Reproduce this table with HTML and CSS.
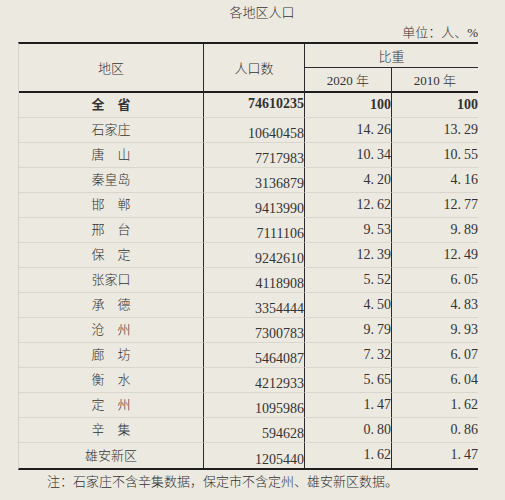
FILE: index.html
```html
<!DOCTYPE html>
<html lang="zh">
<head>
<meta charset="utf-8">
<title>各地区人口</title>
<link rel="stylesheet" href="styles.css">
</head>
<body>
<div class="page">
  <div class="title">各地区人口</div>
  <div class="unit">单位：人、%</div>
  <div class="grid">
    <div class="c h1 span2">地区</div>
    <div class="c h2 span2">人口数</div>
    <div class="c h3">比重</div>
    <div class="c h4">2020 年</div>
    <div class="c h5">2010 年</div>

    <div class="c r bold">全　省</div><div class="c p top bold">74610235</div><div class="c n bold">100</div><div class="c n last bold">100</div>
    <div class="c r">石家庄</div><div class="c p">10640458</div><div class="c n">14<span class="d">.</span>26</div><div class="c n last">13<span class="d">.</span>29</div>
    <div class="c r">唐　山</div><div class="c p">7717983</div><div class="c n">10<span class="d">.</span>34</div><div class="c n last">10<span class="d">.</span>55</div>
    <div class="c r">秦皇岛</div><div class="c p">3136879</div><div class="c n">4<span class="d">.</span>20</div><div class="c n last">4<span class="d">.</span>16</div>
    <div class="c r">邯　郸</div><div class="c p">9413990</div><div class="c n">12<span class="d">.</span>62</div><div class="c n last">12<span class="d">.</span>77</div>
    <div class="c r">邢　台</div><div class="c p">7111106</div><div class="c n">9<span class="d">.</span>53</div><div class="c n last">9<span class="d">.</span>89</div>
    <div class="c r">保　定</div><div class="c p">9242610</div><div class="c n">12<span class="d">.</span>39</div><div class="c n last">12<span class="d">.</span>49</div>
    <div class="c r">张家口</div><div class="c p">4118908</div><div class="c n">5<span class="d">.</span>52</div><div class="c n last">6<span class="d">.</span>05</div>
    <div class="c r">承　德</div><div class="c p">3354444</div><div class="c n">4<span class="d">.</span>50</div><div class="c n last">4<span class="d">.</span>83</div>
    <div class="c r">沧　州</div><div class="c p">7300783</div><div class="c n">9<span class="d">.</span>79</div><div class="c n last">9<span class="d">.</span>93</div>
    <div class="c r">廊　坊</div><div class="c p">5464087</div><div class="c n">7<span class="d">.</span>32</div><div class="c n last">6<span class="d">.</span>07</div>
    <div class="c r">衡　水</div><div class="c p">4212933</div><div class="c n">5<span class="d">.</span>65</div><div class="c n last">6<span class="d">.</span>04</div>
    <div class="c r">定　州</div><div class="c p">1095986</div><div class="c n">1<span class="d">.</span>47</div><div class="c n last">1<span class="d">.</span>62</div>
    <div class="c r">辛　集</div><div class="c p">594628</div><div class="c n">0<span class="d">.</span>80</div><div class="c n last">0<span class="d">.</span>86</div>
    <div class="c r end">雄安新区</div><div class="c p end">1205440</div><div class="c n end">1<span class="d">.</span>62</div><div class="c n last end">1<span class="d">.</span>47</div>
  </div>
  <div class="note">注：石家庄不含辛集数据，保定市不含定州、雄安新区数据。</div>
</div>
</body>
</html>
```
FILE: styles.css
```css
html, body {
  margin: 0;
  padding: 0;
  background: #ece9e0;
}
.page {
  width: 505px;
  height: 500px;
  font-family: "Liberation Serif", "Noto Sans CJK SC", serif;
  font-size: 13px;
  font-weight: 300;
  color: #333333;
  padding-top: 5px;
  box-sizing: border-box;
}
.title {
  height: 16px;
  line-height: 16px;
  text-align: center;
  padding-left: 19px;
}
.unit {
  margin-top: 4px;
  height: 16px;
  line-height: 16px;
  width: 478px;
  text-align: right;
}
.grid {
  margin-top: 1px;
  margin-left: 18px;
  width: 459px;
  display: grid;
  grid-template-columns: 185px 101px 87px 86px;
  grid-template-rows: 24px 25px repeat(15, 25px);
  border-top: 2px solid #1e1e1e;
  border-bottom: 2px solid #1e1e1e;
  border-left: 1px solid #d6d3ca;
}
.c {
  box-sizing: border-box;
  display: flex;
  align-items: center;
  justify-content: center;
  line-height: 16px;
  border-right: 1px solid #2a2a2a;
  border-bottom: 1px solid #d9d6cd;
  white-space: nowrap;
}
.span2 {
  border-bottom: 2px solid #1e1e1e;
  padding-top: 3px;
}
.h1 { grid-column: 1; grid-row: 1 / span 2; }
.h2 { grid-column: 2; grid-row: 1 / span 2; }
.h3 {
  grid-column: 3 / span 2;
  border-right: none;
  border-bottom: 1px solid #2a2a2a;
  padding-top: 3px;
}
.h4 {
  border-bottom: 2px solid #1e1e1e;
  padding-top: 3px;
}
.h5 {
  border-right: none;
  border-bottom: 2px solid #1e1e1e;
  padding-top: 3px;
}
.r {
  justify-content: center;
}
.p {
  font-size: 14px;
  font-weight: normal;
  justify-content: flex-end;
  align-items: flex-end;
}
.p.top {
  align-items: center;
  padding-bottom: 2px;
}
.n {
  font-size: 14px;
  font-weight: normal;
  justify-content: flex-end;
  padding-bottom: 1px;
}
.d {
  margin-right: 3px;
}
.last {
  border-right: none;
}
.end {
  border-bottom: none;
}
.bold,
.p.bold,
.n.bold {
  font-weight: bold;
}
.note {
  margin-top: 4px;
  height: 16px;
  line-height: 16px;
  padding-left: 47px;
}
```
